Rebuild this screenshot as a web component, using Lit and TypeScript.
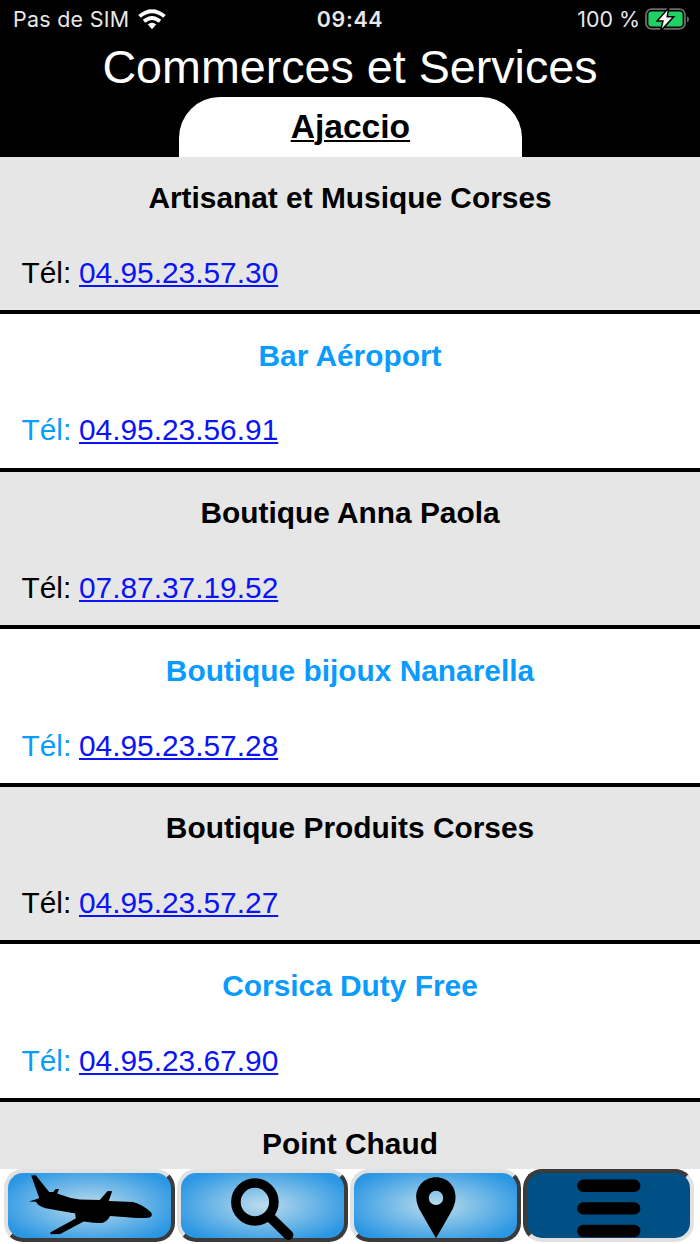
import { LitElement, html, css, svg } from "lit";
import { customElement, property } from "lit/decorators.js";
import { classMap } from "lit/directives/class-map.js";

interface Shop {
  name: string;
  tel: string;
}

const SHOPS: Shop[] = [
  { name: "Artisanat et Musique Corses", tel: "04.95.23.57.30" },
  { name: "Bar Aéroport", tel: "04.95.23.56.91" },
  { name: "Boutique Anna Paola", tel: "07.87.37.19.52" },
  { name: "Boutique bijoux Nanarella", tel: "04.95.23.57.28" },
  { name: "Boutique Produits Corses", tel: "04.95.23.57.27" },
  { name: "Corsica Duty Free", tel: "04.95.23.67.90" },
  { name: "Point Chaud", tel: "" },
];

// Icons share the coordinate space of a 180x84 tile.
const PLANE = svg`<path d="M31.5 15.5 L36 15.3 L49.5 32 L53.5 32 L56 29 L59.3 29 L57.5 33.5 L71 38 L80 39.5 L100 40 L108 31 L112.5 31.2 L109 41 L133 42 Q143 44.5 151.5 52.5 Q153.5 56 149.5 57.5 Q146 58.3 137 58 L110.5 56 Q106.5 62.8 101.5 63 L94 62.8 L84 61.6 L60.5 74 L51 74.2 L50.5 72.5 L76 58.5 L75.5 53.5 L46 48.3 Q38 46 36.3 41.8 L29 41.5 L36.5 39.3 L39.5 38 Z"/>`;
const SEARCH = svg`<circle cx="80" cy="42" r="19" fill="none" stroke="#000" stroke-width="9.6"/><path d="M95 57 L113.5 75" stroke="#000" stroke-width="10" stroke-linecap="round"/>`;
const PIN = svg`<path fill-rule="evenodd" d="M88 17.2 C76.5 17.2 68.2 26 68.2 37 C68.2 43 70.5 47.8 73.5 53 L88 78.3 L102.5 53 C105.5 47.8 107.6 43 107.6 37 C107.6 26 99.5 17.2 88 17.2 Z M88 30.7 A7.2 7.2 0 1 1 88 45.1 A7.2 7.2 0 1 1 88 30.7 Z"/>`;
const MENU = svg`<path d="M63 25.8 H113.8 M63 48.4 H113.8 M63 71 H113.8" stroke="#000" stroke-width="12.4" stroke-linecap="round"/>`;

@customElement("status-bar")
export class StatusBar extends LitElement {
  static styles = css`
    :host {
      display: grid;
      grid-template-columns: 1fr auto 1fr;
      align-items: center;
      height: 40px;
      box-sizing: border-box;
      padding: 0 10px 0 13px;
      color: #e8e8e8;
      font: 400 21.4px/38px Inter, "Liberation Sans", sans-serif;
      white-space: pre;
    }
    .side {
      display: flex;
      align-items: center;
      height: 38px;
      margin-bottom: 2px;
    }
    .carrier {
      letter-spacing: 0.3px;
    }
    .wifi {
      margin: 0 0 0 9px;
    }
    .time {
      margin: 0 3px 2px 0;
      font-weight: 600;
      letter-spacing: 0.7px;
    }
    .right {
      justify-content: flex-end;
    }
    .battery {
      margin: 0 0 1px 5px;
    }
  `;

  render() {
    return html`
      <div class="side">
        <span class="carrier">Pas de SIM</span>
        <svg class="wifi" width="28" height="21" viewBox="0 0 28 21" fill="none" stroke="#fff" stroke-width="3.8">
          <path d="M1.5 7.4 Q14 -2.8 26.5 7.4" />
          <path d="M6 12.3 Q14 5.6 22 12.3" />
          <path d="M9.8 15.6 Q14 12 18.2 15.6 L14.7 19.5 Q14 20.2 13.3 19.5 Z" fill="#fff" stroke="none" />
        </svg>
      </div>
      <div class="time">09:44</div>
      <div class="side right">
        <span>100 %</span>
        <svg class="battery" width="45" height="24" viewBox="0 0 45 24">
          <rect x="1" y="2.2" width="39" height="19.6" rx="5.5" fill="none" stroke="#6a6a6a" stroke-width="1.8" />
          <rect x="3.4" y="4.6" width="34.2" height="14.8" rx="3.2" fill="#1fd163" />
          <path d="M42 9.2 Q44 10 44 12.2 Q44 14.5 42 15.3 Z" fill="#6a6a6a" />
          <path d="M22.6 3.2 L13.8 13.2 H18.9 L16.9 21.6 L27 10.6 H21.3 Z" fill="#fff" stroke="#000" stroke-width="3" paint-order="stroke" />
        </svg>
      </div>
    `;
  }
}

@customElement("shop-row")
export class ShopRow extends LitElement {
  @property({ attribute: false }) shop!: Shop;
  @property({ type: Boolean }) light = false;

  static styles = css`
    :host {
      display: block;
      flex: none;
    }
    .row {
      height: 157.55px;
      box-sizing: border-box;
      padding: 22.6px 21.5px 0;
      border-bottom: 4px solid #000;
      background: #e6e6e6;
      color: #000;
      font-size: 29.87px;
      line-height: 37.3px;
      white-space: nowrap;
    }
    .light {
      background: #fff;
      color: #0a9bff;
    }
    .name {
      font-weight: 700;
      text-align: center;
    }
    .tel {
      margin-top: 37.3px;
    }
    .link {
      margin-left: -0.6px;
      color: #0a14f5;
      text-decoration: underline;
      text-decoration-thickness: 2px;
      text-underline-offset: 2px;
      text-decoration-skip-ink: none;
    }
  `;

  render() {
    return html`
      <div class=${classMap({ row: true, light: this.light })}>
        <div class="name">${this.shop.name}</div>
        ${this.shop.tel
          ? html`<div class="tel">Tél: <a class="link">${this.shop.tel}</a></div>`
          : null}
      </div>
    `;
  }
}

@customElement("nav-button")
export class NavButton extends LitElement {
  @property({ attribute: false }) icon: unknown;
  @property({ type: Boolean }) active = false;
  @property({ type: Number }) shift = 0;

  static styles = css`
    :host {
      display: block;
      min-width: 0;
    }
    .button {
      height: 73px;
      box-sizing: border-box;
      border: 4px solid;
      border-color: #e1e1e1 #3b3b3b #3b3b3b #e1e1e1;
      border-radius: 19px;
      background: radial-gradient(ellipse farthest-corner, #bcdcec 0%, #2b97e3 78%);
      background-origin: border-box;
      display: flex;
      justify-content: center;
      align-items: center;
    }
    .active {
      border-color: #3b3b3b #e1e1e1 #e1e1e1 #3b3b3b;
      background: #005086;
    }
    .icon {
      flex: none;
      overflow: visible;
    }
  `;

  render() {
    return html`
      <div class=${classMap({ button: true, active: this.active })}>
        <svg class="icon" width="171" height="73" viewBox="${this.shift} 9 171 73">${this.icon}</svg>
      </div>
    `;
  }
}

@customElement("app-root")
export class AppRoot extends LitElement {
  static styles = css`
    :host {
      display: flex;
      flex-direction: column;
      width: 700px;
      height: 1244px;
      overflow: hidden;
      background: #fff;
      font-family: "Liberation Sans", Arial, sans-serif;
    }
    .head {
      flex: none;
      height: 156.7px;
      display: flex;
      flex-direction: column;
      background: #000;
    }
    .title {
      height: 57px;
      color: #fff;
      text-align: center;
      font-size: 46.67px;
      line-height: 55px;
      white-space: nowrap;
    }
    .tab {
      width: 342.4px;
      height: 59.7px;
      margin-left: 179.2px;
      border-radius: 41px 41px 0 0;
      background: #fff;
      text-align: center;
      font-weight: 700;
      font-size: 33.6px;
      line-height: 59px;
    }
    .city {
      text-decoration: underline;
      text-decoration-thickness: 2px;
      text-underline-offset: 2px;
    }
    .list {
      flex: 1;
      min-height: 0;
      overflow: hidden;
      display: flex;
      flex-direction: column;
    }
    .nav {
      flex: none;
      height: 75px;
      box-sizing: border-box;
      padding: 0 6px 0 4.3px;
      display: grid;
      grid-template-columns: repeat(4, minmax(0, 1fr));
      gap: 2px;
      background: #fff;
    }
  `;

  render() {
    return html`
      <header class="head">
        <status-bar></status-bar>
        <div class="title">Commerces et Services</div>
        <div class="tab"><span class="city">Ajaccio</span></div>
      </header>
      <main class="list">
        ${SHOPS.map((shop, i) => html`<shop-row .shop=${shop} ?light=${i % 2 === 1}></shop-row>`)}
      </main>
      <nav class="nav">
        <nav-button .icon=${PLANE} .shift=${4.3}></nav-button>
        <nav-button .icon=${SEARCH} .shift=${2.1}></nav-button>
        <nav-button .icon=${PIN} .shift=${2}></nav-button>
        <nav-button .icon=${MENU} .shift=${2.6} active></nav-button>
      </nav>
    `;
  }
}
